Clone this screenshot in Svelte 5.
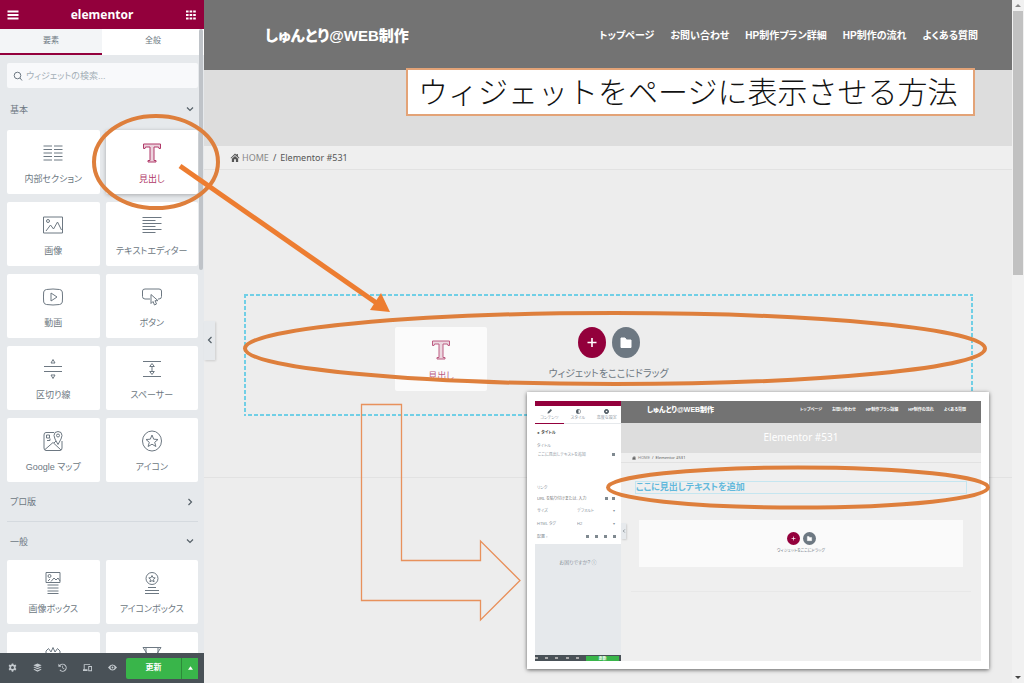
<script lang="ts">
    type Widget = { label: string; d: string; active?: boolean; peek?: boolean };

    const heading =
        "M1.500 2h17v4.500H17L16.500 5H12v13.500h2V20H6v-1.500h2V5H3.500L3 6.500H1.500z";

    const basic: Widget[] = [
        {
            label: "内部セクション",
            d: "M.5 4h8.500M11 4h8.500M.5 7.500h8.500M11 7.500h8.500M.5 11h8.500M11 11h8.500M.5 14.500h8.500M11 14.500h8.500M.5 18h8.500M11 18h8.500",
        },
        { label: "見出し", d: heading, active: true },
        {
            label: "画像",
            d: "M.5 3h19v16H.5zM3 17l4.500-6 3 4 4-7 4 8M3.500 7a1.500 1.500 0 1 0 3 0a1.500 1.500 0 1 0-3 0",
        },
        {
            label: "テキストエディター",
            d: "M.5 3.500h19M.5 6.500h13M.5 9.500h19M.5 12.500h13M.5 15.500h19M.5 18.500h13",
        },
        {
            label: "動画",
            d: "M3.500 3.500q6.500-1 13 0q2.500.3 2.800 2.500q.5 5 0 10q-.3 2.200-2.800 2.500q-6.500 1-13 0q-2.500-.3-2.800-2.500q-.5-5 0-10q.3-2.200 2.800-2.500zM8 7l6 4-6 4z",
        },
        {
            label: "ボタン",
            d: "M8 13H3Q.5 13 .5 10.500V5Q.5 3 3 3h14q2.500 0 2.500 2v5.500q0 2.500-2.500 2.500h-1M9 8.500v9l2-2 1.500 3.500 2-1-1.500-3.300h3z",
        },
        {
            label: "区切り線",
            d: "M1 8.500h18M1 13.500h18M10 1.500l2 3.500H8zM10 20.500l2-3.500H8z",
        },
        {
            label: "スペーサー",
            d: "M1 3.500h18M1 18.500h18M10 5.500l2.300 3H7.700zM10 16.500l2.300-3H7.700zM10 8.500v5",
        },
        {
            label: "Google マップ",
            d: "M11 2.500H3Q1 2.500 1 5v13q0 2.500 2 2.500h14q2 0 2-2.500v-7M2 19.500l8-7 8 7.500M11 13l2-2M15 14.500Q11 8 11 5.500a4 4 0 0 1 8 0Q19 8 15 14.500zM13.500 5.500a1.500 1.500 0 1 0 3 0a1.500 1.500 0 1 0-3 0M3.500 5h3v3h-3zM4 10.500h3v-2",
        },
        {
            label: "アイコン",
            d: "M.5 11a9.500 10 0 1 0 19 0a9.500 10 0 1 0-19 0M10 5l1.700 4.200 4.300.3-3.300 2.800 1.200 4.200L10 14.200l-3.900 2.300 1.200-4.200L4 9.500l4.300-.3z",
        },
    ];

    const general: Widget[] = [
        {
            label: "画像ボックス",
            d: "M3 .5h14v10H3zM5 9l2-2M8 9.500l3-3.500 2 2 2-2 2 3M5 4a1.500 1.500 0 1 0 3 0a1.500 1.500 0 1 0-3 0M4.500 13h11M4.500 16h11M4.500 19h11M4.500 21.500h11",
        },
        {
            label: "アイコンボックス",
            d: "M4 6.500a6 6 0 1 0 12 0a6 6 0 1 0-12 0M10 3.500l1 2.200 2.200.2-1.700 1.600.6 2.300-2.100-1.200-2.100 1.200.6-2.300-1.700-1.600 2.200-.2zM6 15.500h8M3 18.500h14M3 21.500h14",
        },
        {
            label: "画像カルーセル",
            d: "M3 9V7l2.500-2.500L8 8l2-4.500L12 8l2.500-3.500L17 7v2",
            peek: true,
        },
        {
            label: "基本ギャラリー",
            d: "M1 3.500h18M4 4v9M16 4v9M1 3.500l4 6M19 3.500l-4 6",
            peek: true,
        },
    ];

    const tools = [
        {
            label: "設定",
            d: "M5 .5h2l.3 1.500 1.200.6L10 2l1.200 2-1.200 1v1.500L11.200 8 10 10l-1.500-.6-1.200.6L7 11.500H5L4.700 10l-1.200-.6L2 10 .8 8 2 6.500V5L.8 4 2 2l1.500.6L4.700 2zM6 4a2 2 0 1 0 0 4a2 2 0 0 0 0-4z",
        },
        {
            label: "ナビゲーター",
            d: "M6 .5l5.500 2.500L6 5.500.5 3zM2 5l4 1.800L10 5l1.500.8L6 8.300.5 5.800zM2 8l4 1.800L10 8l1.500.8L6 11.500.5 8.800z",
        },
        {
            label: "履歴",
            d: "M.5 1v4h4L3.200 3.700A4 4 0 1 1 3 8.800l-1 1A5.400 5.400 0 1 0 2.200 2.700zM5.700 3.500v3.200l2.300 1.500.5-.8-1.800-1.200V3.500z",
        },
        {
            label: "レスポンシブモード",
            d: "M1 1.500h8.500v1.200H2.200v5.600H6v2.200H0V8.300h1zM7 4h5v7H7zM8.200 5.200v4.500h2.600V5.200z",
        },
        {
            label: "プレビュー",
            d: "M0 6q6-8 12 0q-6 8-12 0zM6 3.300a2.700 2.700 0 1 0 0 5.400a2.700 2.700 0 0 0 0-5.400zM6 4.800a1.200 1.200 0 1 1 0 2.400a1.200 1.200 0 0 1 0-2.400z",
        },
    ];

    const menu = [
        "トップページ",
        "お問い合わせ",
        "HP制作プラン詳細",
        "HP制作の流れ",
        "よくある質問",
    ];
</script>

{#snippet cards(list: Widget[])}
    <div class="cards">
        {#each list as widget}
            <button class="card" class:active={widget.active} aria-label={widget.label}>
                <svg viewBox="0 0 20 22"><path d={widget.d} /></svg>
                {#if !widget.peek}
                    <span>{widget.label}</span>
                {/if}
            </button>
        {/each}
    </div>
{/snippet}

{#snippet chevron(d: string)}
    <svg class="chevron" viewBox="0 0 8 8"><path {d} /></svg>
{/snippet}

{#snippet addButtons()}
    <div class="add">
        <button class="plus" aria-label="追加">
            <svg viewBox="0 0 28 30"><path d="M14 10.500v9M9.500 15h9" /></svg>
        </button>
        <button class="folder" aria-label="テンプレート">
            <svg viewBox="0 0 28 30"><path d="M9 10.500h4l1.500 2H19v7.500H9z" /></svg>
        </button>
    </div>
    <p>ウィジェットをここにドラッグ</p>
{/snippet}

{#snippet siteHeader()}
    <header class="site-header">
        <a class="logo" href="#home">しゅんとり@WEB制作</a>
        <nav>
            {#each menu as item}
                <a href="#menu">{item}</a>
            {/each}
        </nav>
    </header>
{/snippet}

{#snippet crumbs()}
    <div class="crumbs">
        <svg viewBox="0 0 10 10"><path d="M5 .5l1.700 1.700V1h1.500v2.700L10 5.500l-.7.7L5 2.200.7 6.200 0 5.500zM5 3.200l3.500 3.200V10H6V7H4v3H1.500V6.400z" /></svg>
        <a href="#home">HOME</a>
        <span>/</span>
        <span>Elementor #531</span>
    </div>
{/snippet}

<div class="editor">
    <aside class="panel">
        <header class="panel-header">
            <button aria-label="メニュー">
                <svg viewBox="0 0 12 12"><path d="M.5 2.500h11M.5 6h11M.5 9.500h11" /></svg>
            </button>
            <strong>elementor</strong>
            <button aria-label="ウィジェット">
                <svg viewBox="0 0 12 12"><path d="M1 2.500h10M1 6h10M1 9.500h10" stroke-dasharray="2.600 1" /></svg>
            </button>
        </header>
        <div class="tabs">
            <button class="selected">要素</button>
            <button>全般</button>
        </div>
        <div class="panel-body">
            <label class="search">
                <svg viewBox="0 0 10 10"><circle cx="4.500" cy="4.500" r="3.300" /><path d="M7 7l2 2.500" /></svg>
                <input type="search" placeholder="ウィジェットの検索..." aria-label="ウィジェットの検索" />
            </label>
            <button class="category">基本 {@render chevron("M1 2.500l3 3 3-3")}</button>
            {@render cards(basic)}
            <button class="category ruled">プロ版 {@render chevron("M2.500 1l3 3-3 3")}</button>
            <button class="category">一般 {@render chevron("M1 2.500l3 3 3-3")}</button>
            {@render cards(general)}
        </div>
        <footer class="panel-footer">
            {#each tools as tool}
                <button class="tool" aria-label={tool.label}>
                    <svg viewBox="0 0 12 12"><path fill-rule="evenodd" d={tool.d} /></svg>
                </button>
            {/each}
            <button class="update">更新</button>
            <button class="more" aria-label="保存オプション">
                <svg viewBox="0 0 6 4"><path d="M0 4l3-4 3 4z" /></svg>
            </button>
        </footer>
        <div class="panel-thumb"></div>
        <button class="collapse" aria-label="パネルを隠す">
            {@render chevron("M5.500 1l-3 3 3 3")}
        </button>
    </aside>

    <main class="page">
        {@render siteHeader()}
        <div class="banner"></div>
        {@render crumbs()}
        <section class="drop">
            <svg class="dashes"><rect width="100%" height="100%" /></svg>
            {@render addButtons()}
        </section>
        <hr />
    </main>

    <div class="scrollbar">
        <svg viewBox="0 0 6 4"><path d="M0 4l3-3 3 3z" /></svg>
        <div class="thumb"></div>
        <svg class="down" viewBox="0 0 6 4"><path d="M0 0l3 3 3-3z" /></svg>
    </div>

    <div class="card active dragged">
        <svg viewBox="0 0 20 22"><path d={heading} /></svg>
        <span>見出し</span>
    </div>

    <h1 class="callout">ウィジェットをページに表示させる方法</h1>

    <div class="result">
        <aside class="mini-panel">
            <div class="mini-top"></div>
            <div class="mini-tabs">
                <button class="selected">
                    <svg viewBox="0 0 6 6"><path d="M.5 5.500l.5-2L4.500 0 6 1.500 2.500 5z" /></svg>
                    コンテンツ
                </button>
                <button>
                    <svg viewBox="0 0 6 6"><path d="M3 0a3 3 0 0 0 0 6zM3 .3a2.700 2.700 0 0 1 0 5.400v-.6a2.100 2.100 0 0 0 0-4.200z" /></svg>
                    スタイル
                </button>
                <button>
                    <svg viewBox="0 0 6 6"><path fill-rule="evenodd" d="M2 0h2l2 2v2L4 6H2L0 4V2zM3 2a1 1 0 1 0 0 2a1 1 0 0 0 0-2z" /></svg>
                    高度な設定
                </button>
            </div>
            <div class="fields">
                <b>◂ &nbsp;タイトル</b>
                <label for="title">タイトル</label>
                <div class="with-dot">
                    <textarea id="title">ここに見出しテキストを追加</textarea>
                    <i></i>
                </div>
                <label for="link">リンク</label>
                <div class="with-dot">
                    <input id="link" placeholder="URL を貼り付けまたは、入力" />
                    <i></i><i></i>
                </div>
                <div class="row">
                    <label for="size">サイズ</label>
                    <select id="size"><option>デフォルト</option></select>
                    <span>▾</span>
                </div>
                <div class="row">
                    <label for="tag">HTML タグ</label>
                    <select id="tag"><option>H2</option></select>
                    <span>▾</span>
                </div>
                <div class="row">
                    <span class="align">配置 ▫</span>
                    <div class="dots"><i></i><i></i><i></i><i></i></div>
                </div>
            </div>
            <p class="help">お困りですか? ⓘ</p>
            <div class="mini-footer">
                <i></i><i></i><i></i><i></i><i></i>
                <button>更新</button>
            </div>
            <button class="collapse" aria-label="パネルを隠す">
                {@render chevron("M5.500 1l-3 3 3 3")}
            </button>
        </aside>
        <div class="mini-page">
            {@render siteHeader()}
            <div class="banner">Elementor #531</div>
            {@render crumbs()}
            <h2>ここに見出しテキストを追加</h2>
            <section class="drop">{@render addButtons()}</section>
            <hr />
        </div>
    </div>

    <svg class="marks" viewBox="0 0 1024 683">
        <ellipse cx="156" cy="162" rx="62" ry="46" />
        <ellipse cx="615" cy="348.500" rx="370" ry="35.500" />
        <ellipse cx="798" cy="487.500" rx="190" ry="20" />
        <path class="shaft" d="M180 166L378 304" />
        <path class="head" d="M390 312L370 310L381 293z" />
        <path class="outline" d="M361.500 404.500h40v156h79v-19.500l39.500 39.500-39.500 39.500v-19.500h-119z" />
    </svg>
</div>

<style>
    :global(body) {
        background: #ededed;
    }

    .editor {
        position: relative;
        display: flex;
        height: 100vh;
        min-height: 683px;
        overflow: hidden;
        font-family: "Liberation Sans", "Noto Sans CJK JP", sans-serif;
        font-size: 10px;
        font-feature-settings: "palt";
        color: #6d7882;
    }

    .editor * {
        box-sizing: border-box;
    }

    button,
    input,
    textarea,
    select {
        margin: 0;
        padding: 0;
        border: 0;
        background: none;
        font: inherit;
        font-feature-settings: inherit;
        color: inherit;
    }

    a {
        color: inherit;
        text-decoration: none;
    }

    p {
        margin: 0;
    }

    /* panel */
    .panel {
        position: relative;
        flex: 0 0 204px;
        display: flex;
        flex-direction: column;
        background: #e6e9ec;
    }

    .panel-header {
        display: flex;
        align-items: center;
        justify-content: space-between;
        height: 29px;
        padding: 0 7px;
        background: #93003c;
        color: #fff;
    }

    .panel-header strong {
        font: bold 12px/26px "Noto Sans", sans-serif;
    }

    .panel-header svg {
        display: block;
        width: 12px;
        height: 12px;
        stroke: #fff;
        stroke-width: 2;
    }

    .tabs {
        display: flex;
        height: 26px;
        font-size: 8px;
        line-height: 22px;
    }

    .tabs button {
        flex: 1;
        border-bottom: 2px solid #fff;
        background: #fff;
    }

    .tabs .selected {
        border-color: #93003c;
        background: #f3f5f7;
    }

    .panel-body {
        flex: 1;
        min-height: 0;
        overflow: hidden;
        padding: 8px 6px 0 7px;
    }

    .search {
        display: flex;
        align-items: center;
        gap: 3px;
        height: 25px;
        padding: 0 6px;
        background: #f8f9fb;
        border-radius: 2px;
    }

    .search svg {
        width: 10px;
        height: 10px;
        fill: none;
        stroke: #6d7882;
    }

    .search input {
        flex: 1;
        min-width: 0;
        outline: none;
        font-size: 9px;
    }

    .search input::placeholder {
        color: #a4afb7;
    }

    .category {
        display: flex;
        align-items: center;
        justify-content: space-between;
        width: 100%;
        height: 38px;
        padding: 0 4px 0 3px;
        font-size: 9px;
    }

    .search + .category {
        height: 42px;
    }

    .category.ruled {
        height: 40px;
        border-bottom: 1px solid #d5dadf;
    }

    .chevron {
        width: 8px;
        height: 8px;
        fill: none;
        stroke: #556068;
        stroke-width: 1.2;
    }

    .cards {
        display: grid;
        grid-template-columns: 1fr 1fr;
        gap: 8px 6px;
    }

    .card {
        display: flex;
        flex-direction: column;
        align-items: center;
        gap: 7px;
        height: 64px;
        padding-top: 12px;
        background: #fff;
        border-radius: 2px;
        font-size: 9px;
        line-height: 16px;
    }

    .card svg {
        flex: none;
        width: 20px;
        height: 22px;
        fill: none;
        stroke: #6d7882;
    }

    .card.active {
        color: #b03868;
        box-shadow: 0 1px 4px #0004;
    }

    .card.active svg {
        fill: #ecd3dd;
        stroke: #b03868;
    }

    .panel-footer {
        display: flex;
        align-items: center;
        height: 30px;
        padding-right: 6px;
        background: #495157;
    }

    .tool {
        flex: 0 0 25px;
        height: 100%;
    }

    .tool svg {
        width: 9px;
        height: 9px;
        fill: #c4cacf;
    }

    .update {
        flex: 1;
        height: 21px;
        margin-left: 1px;
        border-radius: 2px 0 0 2px;
        background: #39b54a;
        color: #fff;
        font-size: 8px;
        font-weight: bold;
        line-height: 20px;
    }

    .more {
        width: 17px;
        height: 21px;
        border-left: 1px solid #2c8a39;
        background: #39b54a;
    }

    .more svg {
        display: block;
        width: 5px;
        height: 4px;
        margin: auto;
        fill: #fff;
    }

    .panel-thumb {
        position: absolute;
        top: 29px;
        right: 1px;
        width: 4px;
        height: 241px;
        border-radius: 2px;
        background: #bfc3c8;
    }

    .collapse {
        position: absolute;
        top: 321px;
        left: 100%;
        width: 11px;
        height: 39px;
        background: #e6e9ec;
        box-shadow: 1px 1px 2px #0002;
    }

    /* page */
    .page {
        flex: 1;
        min-width: 0;
        background: #ededed;
    }

    .site-header {
        display: flex;
        align-items: center;
        justify-content: space-between;
        height: 70px;
        padding: 0 34px 2px 61px;
        background: #737373;
        color: #fff;
        font-weight: bold;
    }

    .logo {
        font-size: 15px;
        font-weight: 900;
    }

    .site-header nav {
        display: flex;
        gap: 16px;
    }

    .banner {
        height: 76px;
        background: #ddd;
    }

    .crumbs {
        display: flex;
        align-items: center;
        gap: 4px;
        height: 24px;
        padding-left: 26px;
        border-bottom: 1px solid #e2e2e2;
        background: #efefef;
        font: 9px "Noto Sans", sans-serif;
        color: #555;
    }

    .crumbs svg {
        width: 10px;
        height: 9px;
        margin-right: -2px;
        fill: #555;
    }

    .crumbs a {
        color: #888;
    }

    .drop {
        position: relative;
        display: flex;
        flex-direction: column;
        align-items: center;
        gap: 7px;
        height: 122px;
        margin: 124px 39px 0 40px;
        padding-top: 33px;
        line-height: 18px;
    }

    .dashes {
        position: absolute;
        inset: 0;
        width: 100%;
        height: 100%;
        fill: none;
        stroke: #71cfe6;
        stroke-width: 4;
        stroke-dasharray: 4 2;
    }

    .add {
        display: flex;
        gap: 6px;
    }

    .add button {
        width: 28px;
        height: 31px;
        border-radius: 50%;
        background: #93003c;
    }

    .add .folder {
        background: #6d7882;
    }

    .add svg {
        display: block;
        width: 100%;
        height: 100%;
        stroke: #fff;
        stroke-width: 1.6;
    }

    .folder svg {
        fill: #fff;
        stroke-width: 1;
        stroke-linejoin: round;
    }

    hr {
        height: 1px;
        margin: 61px 0 0;
        border: 0;
        background: #e2e2e2;
    }

    .scrollbar {
        flex: 0 0 12px;
        display: flex;
        flex-direction: column;
        align-items: center;
        gap: 4px;
        padding: 3px 0;
        background: #f1f1f1;
    }

    .scrollbar svg {
        width: 6px;
        height: 4px;
        fill: #888;
    }

    .scrollbar .down {
        margin-top: auto;
        fill: #444;
    }

    .thumb {
        width: 10px;
        height: 264px;
        background: #c1c1c1;
    }

    /* things laid over the page */
    .dragged {
        position: absolute;
        left: 395px;
        top: 327px;
        width: 92px;
        opacity: 0.8;
    }

    .card.dragged {
        box-shadow: none;
    }

    .callout {
        position: absolute;
        left: 406px;
        top: 68px;
        margin: 0;
        padding: 0 16px 4px 10px;
        border: 2px solid #e3a377;
        background: #fff;
        color: #111;
        font-family: "Noto Sans CJK JP", sans-serif;
        font-size: 30px;
        font-weight: 300;
        font-feature-settings: normal;
        line-height: 40px;
        white-space: nowrap;
    }

    .marks {
        position: absolute;
        left: 0;
        top: 0;
        width: 1024px;
        height: 683px;
        fill: none;
        stroke: #de7f3c;
        stroke-width: 4;
        pointer-events: none;
    }

    .marks .shaft {
        stroke: #ed7d31;
        stroke-width: 5;
    }

    .marks .head {
        fill: #ed7d31;
        stroke: none;
    }

    .marks .outline {
        stroke: #e8915c;
        stroke-width: 1.3;
    }

    .result {
        position: absolute;
        left: 527px;
        top: 392px;
        display: flex;
        width: 462px;
        height: 277px;
        padding: 9px 8px 8px;
        background: #fff;
        box-shadow: 0 1px 4px #0009;
        font-size: 4px;
    }

    .mini-panel {
        position: relative;
        flex: 0 0 86px;
        min-width: 0;
        display: flex;
        flex-direction: column;
        background: #e6e9ec;
        color: #8a949c;
    }

    .mini-panel .collapse {
        top: 122px;
        width: 5px;
        height: 16px;
    }

    .mini-panel .chevron {
        display: block;
        width: 4px;
        height: 4px;
        margin: auto;
    }

    .mini-top {
        height: 5px;
        background: #93003c;
    }

    .mini-tabs {
        display: flex;
        height: 18px;
        background: #fff;
        line-height: 6px;
    }

    .mini-tabs button {
        flex: 1;
        min-width: 0;
        border-bottom: 1px solid #e6e9ec;
        white-space: nowrap;
    }

    .mini-tabs .selected {
        border-color: #93003c;
    }

    .mini-tabs svg {
        display: block;
        width: 5px;
        height: 5px;
        margin: 0 auto 1px;
        fill: #556068;
    }

    .fields {
        display: flex;
        flex-direction: column;
        height: 120px;
        padding: 4px 2px 0;
        background: #fff;
        line-height: 9px;
    }

    .fields b {
        height: 13px;
        color: #444;
    }

    .fields textarea {
        display: block;
        height: 33px;
        padding: 0 1px;
        resize: none;
        overflow: hidden;
    }

    .fields input {
        flex: 1;
        min-width: 0;
        height: 12px;
    }

    .with-dot {
        display: flex;
        align-items: baseline;
        gap: 4px;
        padding-right: 4px;
    }

    .with-dot textarea {
        flex: 1;
        min-width: 0;
    }

    .row {
        display: grid;
        grid-template-columns: 40px 1fr 6px;
        height: 13px;
        align-items: center;
    }

    .row select {
        appearance: none;
        min-width: 0;
    }

    .dots {
        display: flex;
        justify-content: space-between;
        grid-column: 2 / 4;
        padding: 0 3px 0 9px;
    }

    i {
        width: 3px;
        height: 3px;
        background: #7f8990;
    }

    .help {
        flex: 1;
        padding-top: 14px;
        text-align: center;
        font-size: 5px;
        line-height: 8px;
    }

    .mini-footer {
        display: flex;
        align-items: center;
        justify-content: space-between;
        height: 6px;
        padding-right: 2px;
        background: #495157;
    }

    .mini-footer i {
        height: 2px;
        background: #aaa;
    }

    .mini-footer button {
        flex: 0 0 33px;
        height: 5px;
        overflow: hidden;
        background: #39b54a;
        color: #fff;
        font-weight: bold;
        line-height: 5px;
    }

    .mini-page {
        flex: 1;
        min-width: 0;
        background: #efefef;
    }

    .mini-page .site-header {
        height: 22px;
        padding: 0 15px 7px 26px;
    }

    .mini-page .logo {
        font-size: 7px;
    }

    .mini-page nav {
        gap: 10px;
    }

    .mini-page .banner {
        height: 30px;
        color: #fff;
        font: 10px/28px "Noto Sans", sans-serif;
        text-align: center;
    }

    .mini-page .crumbs {
        gap: 2px;
        height: 10px;
        padding-left: 11px;
        font-size: 4px;
    }

    .mini-page .crumbs svg {
        width: 4px;
        height: 4px;
        margin: 0;
    }

    .mini-page h2 {
        margin: 18px 14px 0;
        border: 1px solid #c5e6f0;
        color: #62b9dc;
        font-size: 9px;
        line-height: 11px;
    }

    .mini-page .drop {
        gap: 3px;
        height: 47px;
        margin: 26px 18px 0;
        padding-top: 12px;
        background: #fafafa;
        line-height: 6px;
    }

    .mini-page .add {
        gap: 3px;
    }

    .mini-page .add button {
        width: 13px;
        height: 13px;
    }

    .mini-page hr {
        margin: 24px 10px 0;
        background: #e8e8e8;
    }
</style>
